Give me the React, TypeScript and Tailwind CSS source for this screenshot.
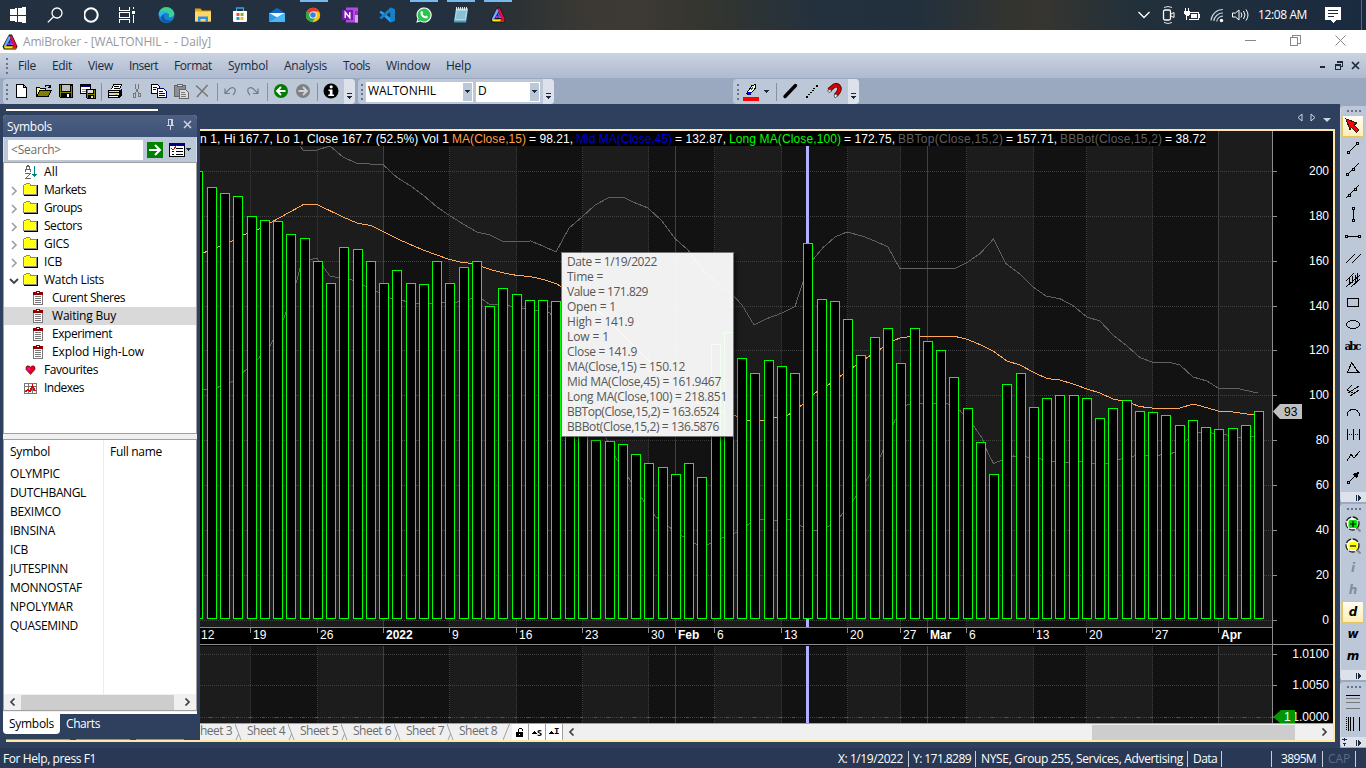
import React, { useLayoutEffect, useRef } from "react";

/* ---------- text that is tracked to a fixed width ---------- */
function Fit({ w, className = "", children }: { w: number; className?: string; children: string }) {
  const ref = useRef<HTMLSpanElement>(null);
  useLayoutEffect(() => {
    const el = ref.current;
    if (!el) return;
    el.style.letterSpacing = "0px";
    const natural = el.getBoundingClientRect().width;
    el.style.letterSpacing = `${(w - natural) / children.length}px`;
  }, [w, children]);
  return (
    <span ref={ref} className={`inline-block shrink-0 whitespace-pre ${className}`}>
      {children}
    </span>
  );
}

type IcoProps = { w?: number; h?: number; children: React.ReactNode; smooth?: boolean };
function Ico({ w = 16, h = 16, children, smooth }: IcoProps) {
  return (
    <svg width={w} height={h} viewBox={`0 0 ${w} ${h}`} fill="none" className="block shrink-0" shapeRendering={smooth ? "auto" : "crispEdges"}>
      {children}
    </svg>
  );
}

const AmiLogo = () => (
  <Ico smooth>
    <path d="M7 0.5L10 0.5L15.5 12.5L14 15.5H2L0.5 12.5Z" fill="#111" />
    <path d="M7 1.5L1.5 12.5L4 12.5L8.8 4Z" fill="#6fa8ff" />
    <path d="M8 1.2L9.6 1.2L14.6 12L12.5 13L8.8 5Z" fill="#e8104a" />
    <path d="M8.5 5.5L11.5 11H5.5L6.5 9H8.6L7.8 7Z" fill="#f3d" />
    <path d="M2 12.2H13.8V14.6H2.6Z" fill="#ffe600" />
    <path d="M6 11L8.8 6L10 8.5L9 11Z" fill="#3b49ff" />
    <path d="M12 10L14.8 12.5L13.8 14.6L10 14.6Z" fill="#e81010" />
  </Ico>
);

/* ---------- task bar ---------- */
const taskIcons: { el: React.ReactNode; open?: boolean }[] = [
  {
    el: (
      <Ico>
        <path d="M0 2.2L6.5 1.3V7.5H0zM7.5 1.2L16 0V7.5H7.5zM0 8.5H6.5V14.7L0 13.8zM7.5 8.5H16V16L7.5 14.8z" fill="#fff" />
      </Ico>
    ),
  },
  {
    el: (
      <Ico smooth>
        <circle cx="10" cy="6" r="5" stroke="#fff" strokeWidth="1.3" />
        <path d="M6.5 9.7L0.8 15.4" stroke="#fff" strokeWidth="1.3" />
      </Ico>
    ),
  },
  { el: <Ico smooth><circle cx="7" cy="8" r="6.7" stroke="#fff" strokeWidth="2" /></Ico> },
  {
    el: (
      <Ico w={22}>
        <path d="M1 0v3.500h10V0M1 16v-3.500h10V16M1 5.500h10v5H1zM15.500 0v2M15.500 8v8" stroke="#fff" />
        <path d="M14 4h3v3h-3z" fill="#fff" />
      </Ico>
    ),
  },
  {
    el: (
      <Ico w={17} smooth>
        <circle cx="8.500" cy="8" r="8" fill="#1683d8" />
        <path d="M1 6C2.500-1 13-2 16.200 6C17 10 12 11 10.500 9.800C12 8 10.500 5.500 8 5C5 4.300 2 5 1 6Z" fill="#3fd08d" />
        <path d="M1 5.500C4 3 9 4 10.500 7C7 4.500 3.500 7 4.500 11C1 9 0.300 7.500 1 5.500Z" fill="#2fb6e8" />
        <path d="M6 7.500C5 12 9 15 14.500 12.800C11 17.500 3 16 3 10.500C3.200 8.500 4.500 7.500 6 7.500Z" fill="#0c59a4" />
      </Ico>
    ),
  },
  {
    el: (
      <Ico smooth>
        <path d="M0 1.500h5.500l1.500 2h9v11H0z" fill="#e8a317" />
        <path d="M0 4.500h16v10H0z" fill="#ffd766" />
        <path d="M3 15V9.500h10V15h-2.500v-3h-5v3z" fill="#2f8fe0" />
      </Ico>
    ),
  },
  {
    el: (
      <Ico smooth>
        <path d="M4.500 4V1h7v3" stroke="#3aa0e0" strokeWidth="1.300" />
        <path d="M1 4h14v9.500q0 1.500-1.500 1.500h-11Q1 15 1 13.500z" fill="#fff" />
        <path d="M4.500 6h3v3h-3z" fill="#f25022" />
        <path d="M8.500 6h3v3h-3z" fill="#7fba00" />
        <path d="M4.500 10h3v3h-3z" fill="#00a4ef" />
        <path d="M8.500 10h3v3h-3z" fill="#ffb900" />
      </Ico>
    ),
  },
  {
    el: (
      <Ico smooth>
        <path d="M0 6L8 0.500L16 6V15H0z" fill="#0b5cab" />
        <path d="M1 6L8 1.500L15 6V9H1z" fill="#1467b8" />
        <path d="M0 6L8 10.500L16 6V15H0z" fill="#2a9be8" />
        <path d="M0 6H16L8 10.500z" fill="#e8f4ff" />
        <path d="M0 15L16 6V15z" fill="#47b8f5" />
      </Ico>
    ),
  },
  {
    open: true,
    el: (
      <Ico smooth>
        <circle cx="7" cy="8" r="7.200" fill="#f9c513" />
        <path d="M7 8L0.700 4.500A7.200 7.200 0 0 1 13.300 4.500L7 4.500Z" fill="#e33b2e" />
        <path d="M0.700 4.500A7.200 7.200 0 0 0 6.500 15.200L9.500 10L7 8Z" fill="#2da94f" />
        <circle cx="7" cy="8" r="3.600" fill="#fff" />
        <circle cx="7" cy="8" r="2.800" fill="#3b7ded" />
      </Ico>
    ),
  },
  {
    el: (
      <Ico smooth>
        <path d="M4 0.500h12v15H4z" fill="#b44be0" />
        <path d="M13 4h3v4h-3z" fill="#9332bf" />
        <path d="M13 8h3v7.500h-3z" fill="#d9a2f0" />
        <path d="M0 3h11v10H0z" fill="#7719aa" />
        <path d="M3.200 11V5.200L7.800 10.800V5" stroke="#fff" strokeWidth="1.400" />
      </Ico>
    ),
  },
  {
    el: (
      <Ico smooth>
        <path d="M11.500 0.500L16 2.500V13.500L11.500 15.500L1.500 6.200L0.300 5.200L1.500 4L3 4.200L11.500 11Z" fill="#2a9df0" />
        <path d="M11.500 0.500L16 2.500V13.500L11.500 15.500V11.500V4.800L3 11.700L1.500 12L0.300 10.800Z" fill="#1580cc" />
      </Ico>
    ),
  },
  {
    open: true,
    el: (
      <Ico smooth>
        <path d="M0.300 15.700L1.500 11.800A7.600 7.600 0 1 1 4.300 14.600Z" fill="#fff" />
        <path d="M1.700 14.300L2.500 11.500A6.500 6.500 0 1 1 4.600 13.600Z" fill="#2bc44f" />
        <path d="M5.200 4.200L6.500 4.200L7.200 6L6.500 7Q7.500 8.900 9.300 9.500L10.200 8.600L11.900 9.500Q11.800 11.500 9.800 11.500Q5 10.500 4.400 6Q4.400 4.800 5.200 4.200Z" fill="#fff" />
      </Ico>
    ),
  },
  {
    open: true,
    el: (
      <Ico smooth>
        <path d="M3 1.500h12L13 15H1z" fill="#a8d8e6" />
        <path d="M1 13.500h12.300l-.300 2H1z" fill="#4f97ad" />
        <path d="M4 5h9M3.500 7h9M3.200 9h9M3 11h9" stroke="#5aa0b8" strokeWidth=".8" />
        <path d="M3.500 0v3M5.500 0v3M7.500 0v3M9.500 0v3M11.500 0v3M13.500 0v3" stroke="#dfe6ea" />
      </Ico>
    ),
  },
  { open: true, el: <AmiLogo /> },
];

function TaskBar() {
  return (
    <div className="flex h-[30px] shrink-0 items-center justify-between bg-[linear-gradient(90deg,#223040_0%,#223040_33%,#2c3234_38%,#3c3934_43%,#3d3934_47%,#33352f_52%,#23313e_60%,#22303d_67%,#33342f_74%,#37352f_76%,#22303a_83%,#1a2b40_100%)]">
      <div className="flex h-full">
        {taskIcons.map((t, i) => (
          <div key={i} className="relative flex h-full w-[36.9px] items-center justify-center">
            {t.open && <span className="absolute top-0 h-[2px] w-[28px] bg-[#76b9ed]" />}
            {t.el}
          </div>
        ))}
      </div>
      <div className="flex h-full items-center text-white">
        <Ico w={12} h={8} smooth><path d="M0.500 1L6 6.500L11.500 1" stroke="#fff" strokeWidth="1.300" /></Ico>
        <span className="w-[12px]" />
        <Ico w={13} h={20} smooth>
          <path d="M2 2.500Q6 0.500 10 2.500M2 17.500Q6 19.500 10 17.500" stroke="#ddd" />
          <rect x="1.500" y="5" width="7" height="10" rx="1.500" stroke="#fff" strokeWidth="1.300" />
          <path d="M9 9L12 7.500V12.500L9 11" stroke="#fff" />
        </Ico>
        <span className="w-[9px]" />
        <Ico w={17}>
          <path d="M5.500 5.500h9v7h-10M15.500 7v4" stroke="#fff" />
          <path d="M7 7h6v4H7z" fill="#fff" />
          <path d="M0 4h6v3L4 9H2L0 7zM1 1h1v3H1zM4 1h1v3H4zM2 9h1v4H2z" fill="#fff" />
        </Ico>
        <span className="w-[9px]" />
        <Ico w={14} smooth>
          <path d="M1 13.500A12 12 0 0 1 13 2.500M3.800 14A9 9 0 0 1 13 6M6.700 14.500A6 6 0 0 1 13 9.200" stroke="#c9ced3" strokeWidth="1.200" />
          <circle cx="11.500" cy="13.500" r="1.700" fill="#fff" />
        </Ico>
        <span className="w-[8px]" />
        <Ico w={17} smooth>
          <path d="M.5 6h3L7 3v10L3.500 10H.5z" stroke="#fff" />
          <path d="M9 5.500q1.800 2.500 0 5M11.500 4q3 4 0 8M14 2.500q4 5.500 0 11" stroke="#fff" />
        </Ico>
        <span className="w-[9px]" />
        <Fit w={49} className="text-[12px] leading-4">12:08 AM</Fit>
        <span className="w-[18px]" />
        <Ico w={16} h={16}>
          <path d="M0 0h16v13H11L8 16L5 13H0z" fill="#fff" />
          <path d="M3 3.500h10M3 6.500h10M3 9.500h6" stroke="#1d2a38" />
        </Ico>
        <span className="ml-5 mr-1 h-full w-px bg-[#5a6673]" />
      </div>
    </div>
  );
}

function TitleBar() {
  return (
    <div className="flex h-[23px] shrink-0 items-center bg-white pl-[2px] text-[#999]">
      <AmiLogo />
      <Fit w={188} className="ml-[5px] text-[12px]">{"AmiBroker - [WALTONHIL -  - Daily]"}</Fit>
      <div className="ml-auto flex items-center gap-[34px] pb-[3px] pr-5">
        <Ico w={11} h={11}><path d="M0 5.500h11" stroke="#888" /></Ico>
        <Ico w={11} h={11}><path d="M.5 2.500h7v8h-7zM2.500 2.500v-2h8v8h-3" stroke="#888" /></Ico>
        <Ico w={11} h={11} smooth><path d="M.5 .5l10 10M10.500 .5l-10 10" stroke="#888" /></Ico>
      </div>
    </div>
  );
}

const Grip = () => (
  <Ico w={2} h={16}><path d="M0 0h2v2H0zM0 5h2v2H0zM0 9h2v2H0zM0 14h2v2H0z" fill="#65748e" /></Ico>
);

const menus: [string, number, number][] = [
  ["File", 18, 16], ["Edit", 20, 16], ["View", 25, 16], ["Insert", 29, 16], ["Format", 38, 16],
  ["Symbol", 40, 16], ["Analysis", 43, 16], ["Tools", 27, 16], ["Window", 44, 16], ["Help", 25, 0],
];

function MenuBar() {
  return (
    <div className="flex h-[25px] shrink-0 items-center bg-linear-to-b from-[#cad3e2] to-[#aebacf] pl-[6px] text-[12px] text-[#1b293e]">
      <Grip />
      <div className="ml-[10px] flex gap-4">
        {menus.map(([m, w]) => <Fit key={m} w={w}>{m}</Fit>)}
      </div>
      <div className="ml-auto flex items-center gap-2 pb-px pr-[6px]">
        <Ico w={8} h={8}><path d="M1 5h5v2H1z" fill="#1b293e" /></Ico>
        <Ico w={8} h={9}>
          <path d="M2.500 2V0M2 1h6M7.500 0v6M7 5.500H6" stroke="#1b293e" />
          <path d="M.5 4.500h5v4h-5zM0 4h6" stroke="#1b293e" />
          <path d="M2 0h6v2H2zM0 3h6v2H0z" fill="#1b293e" />
        </Ico>
        <Ico w={9} h={9} smooth><path d="M1 1l7 7M8 1l-7 7" stroke="#1b293e" strokeWidth="1.700" /></Ico>
      </div>
    </div>
  );
}

/* ---------- main tool bar ---------- */
const Sep = () => <span className="ml-[3px] mr-[2px] h-[18px] w-px bg-[#8591a2]" />;
const Overflow = () => (
  <div className="flex h-[25px] w-[11px] items-end justify-center rounded-r-sm bg-[#dce1ec] pb-1">
    <Ico w={5} h={7}><path d="M0 0h5v1H0zM0 3h5v1H0zM1 4h3v1H1zM2 5h1v1H2z" fill="#1b293e" /></Ico>
  </div>
);
const Caret = () => <Ico w={5} h={3}><path d="M0 0h5v1H0zM1 1h3v1H1zM2 2h1v1H2z" fill="#1b293e" /></Ico>;

const disk = (
  <>
    <path d="M1 1h14v14H2L1 14z" fill="#000" />
    <path d="M2 2h1v12H2zM13 3h1v11h-1zM3 9h10v1H3z" fill="#808000" />
    <path d="M4 2h8v6H4z" fill="#c0c0c0" />
    <path d="M9 11h2v3H9z" fill="#fff" />
  </>
);
const newI = <Ico><path d="M2.500 1.500h7l3 3v10h-10zM9.500 1.500v3h3" fill="#fff" stroke="#000" /></Ico>;
const openI = (
  <Ico>
    <path d="M.5 13.500v-9h3l1 1h5v2" fill="#ffff66" stroke="#000" />
    <path d="M.5 13.500L4 7.500h11.500L12 13.500z" fill="#808000" stroke="#000" />
    <path d="M9 3.500L10.500 2h2L14.500 4M14.500 1.500V4.500H12" stroke="#000" />
  </Ico>
);
const saveI = <Ico>{disk}</Ico>;
const saveAllI = (
  <Ico>
    <path d="M.5 1.500h10v9H.5z" fill="#fff" stroke="#000" />
    <path d="M1 2h9v2H1z" fill="#000080" />
    <path d="M2 6h7M2 8h5" stroke="#888" />
    <path d="M6 6h10v10H7L6 15z" fill="#000" />
    <path d="M7 7h1v8H7zM14 7h1v8h-1zM8 11h6v1H8z" fill="#808000" />
    <path d="M8 7h5v3H8zM11 13h2v2h-2z" fill="#ddd" />
  </Ico>
);
const printI = (
  <Ico>
    <path d="M4.500 6.500L6.500 1.500h8l-2 5" fill="#fff" stroke="#000" />
    <path d="M7 3.500h5M6.500 5.500h5" stroke="#000" />
    <path d="M1 7h12l2-1v6l-3 3H1z" fill="#000" />
    <path d="M2 8h10v1H2zM2 10h10v2H2z" fill="#d8d8d8" />
    <path d="M2 13h9v1H2z" fill="#fff" />
    <path d="M8 11h2v1H8z" fill="#cc0" />
  </Ico>
);
const cutI = (
  <Ico>
    <path d="M6.500 1v4l4 6M9.500 1v4l-4 6" stroke="#777" />
    <path d="M4.500 10.500h2v4h-2zM9.500 10.500h2v3h-2z" stroke="#777" />
  </Ico>
);
const copyI = (
  <Ico>
    <path d="M.5 1.500h6l2 2v7h-8z" fill="#fff" stroke="#000" />
    <path d="M6.500 5.500h6l2.500 2.500v6.500H6.500z" fill="#fff" stroke="#000080" />
    <path d="M2 4.500h4M2 6.500h3M8 8.500h4M8 10.500h6M8 12.500h6" stroke="#000080" />
  </Ico>
);
const pasteI = (
  <Ico>
    <path d="M1.500 2.500h11v11h-11z" fill="#8a8f99" stroke="#666" />
    <path d="M4.500 1.500h5v2h-5z" fill="#ddd" stroke="#666" />
    <path d="M6.500 6.500h6l2.500 2.500v6H6.500z" fill="#ddd" stroke="#666" />
    <path d="M8 9.500h4M8 11.500h5M8 13.500h5" stroke="#777" />
  </Ico>
);
const xI = <Ico smooth><path d="M1 2.500L13 13.500M12.500 2L2 14" stroke="#777" strokeWidth="1.500" /></Ico>;
const undoI = <Ico smooth><path d="M2 5.500v5h5M2.500 10L7 5.500Q10 3.500 12 6Q13 9 10 12" stroke="#757b86" strokeWidth="1.200" /></Ico>;
const redoI = <Ico smooth><path d="M13 5.500v5H8M12.500 10L8 5.500Q5 3.500 3 6Q2 9 5 12" stroke="#757b86" strokeWidth="1.200" /></Ico>;
const backI = <Ico smooth><circle cx="8" cy="8" r="7" fill="#007d00" /><path d="M12.500 8H4.500M8 4L4 8L8 12" stroke="#fff" strokeWidth="1.800" /></Ico>;
const fwdI = <Ico smooth><circle cx="8" cy="8" r="7" fill="#808080" /><path d="M3.500 8H11.500M8 4L12 8L8 12" stroke="#ccd3df" strokeWidth="1.800" /></Ico>;
const infoI = (
  <Ico smooth>
    <circle cx="8" cy="8" r="7.500" fill="#000" />
    <circle cx="8.200" cy="3.800" r="1.600" fill="#fff" />
    <path d="M5.500 6.500h4v5h1.500v1.500H5.300v-1.500h1.500V8H5.500z" fill="#fff" />
  </Ico>
);

const Cell = ({ children, w = "w-[22px]" }: { children: React.ReactNode; w?: string }) => (
  <div className={`flex items-center justify-center pb-px ${w}`}>{children}</div>
);

function Combo({ text, w, tw }: { text: string; w: string; tw: number }) {
  return (
    <div className={`flex h-5 items-center bg-white pl-[2px] text-[12px] text-black ${w}`}>
      <Fit w={tw} className="-mt-px">{text}</Fit>
      <div className="ml-auto flex h-5 w-[11px] items-center justify-center border border-white bg-[#bcc7d8]"><Caret /></div>
    </div>
  );
}

function ToolBar() {
  const grp = "flex h-[25px] items-center rounded-sm bg-[#bcc7d8]";
  return (
    <div className="flex h-[26px] shrink-0 items-start bg-[#9ba9c0] pl-[3px] pt-px">
      <div className={`${grp} w-[352px] pl-[3px]`}>
        <Grip />
        <span className="w-[3px]" />
        <Cell>{newI}</Cell><Cell>{openI}</Cell><Cell>{saveI}</Cell><Cell w="w-[21px]">{saveAllI}</Cell>
        <Sep /><Cell>{printI}</Cell><Cell>{cutI}</Cell><Cell>{copyI}</Cell><Cell>{pasteI}</Cell><Cell>{xI}</Cell>
        <Sep /><Cell>{undoI}</Cell><Cell>{redoI}</Cell>
        <Sep /><Cell>{backI}</Cell><Cell>{fwdI}</Cell>
        <Sep /><Cell w="w-[21px]">{infoI}</Cell>
        <div className="ml-auto"><Overflow /></div>
      </div>
      <div className={`${grp} ml-[3px] w-[196px] pl-[3px]`}>
        <Grip />
        <span className="w-[3px]" />
        <Combo text="WALTONHIL" w="w-[107px]" tw={68} />
        <span className="w-[3px]" />
        <Combo text="D" w="w-[64px]" tw={8} />
        <div className="ml-auto"><Overflow /></div>
      </div>
      <div className={`${grp} ml-[179px] w-[126px] pl-1`}>
        <Grip />
        <span className="w-1" />
        <Ico w={17} h={18}>
          <path d="M3.500 10.500L9 2.500L12.500 1.500V5L7 11.500z" fill="#fff" stroke="#000" />
          <path d="M4 12L6 8.500L9 9.500L7 12z" fill="#0000c8" />
          <path d="M8 7l2-3" stroke="#080" />
          <path d="M0 14h16v4H0z" fill="#f00" />
        </Ico>
        <span className="w-[4px]" /><Caret /><span className="w-[4px]" /><Sep />
        <Cell><Ico smooth><path d="M3 13.500L13.500 2.500" stroke="#000" strokeWidth="3.400" strokeLinecap="round" /></Ico></Cell>
        <Cell><Ico><path d="M2 13h2v2H2zM4 11h2v1H4zM6 9h2v1H6zM8 7h2v1H8zM9 5h2v1H9zM12 2h2v2h-2z" fill="#000" /></Ico></Cell>
        <Cell>
          <Ico smooth>
            <path d="M3 7L8 2.800Q12 1 13.500 5Q14 8 9.500 12.500" stroke="#500" strokeWidth="4.500" />
            <path d="M3 7L8 2.800Q12 1 13.500 5Q14 8 9.500 12.500" stroke="#e00000" strokeWidth="2.600" />
            <path d="M1.500 7.500L4.500 6.500L5.500 8.500L3 9.500zM8 12L10 11L11.500 13L9 15z" fill="#fff" stroke="#333" strokeWidth=".7" />
          </Ico>
        </Cell>
        <div className="ml-auto"><Overflow /></div>
      </div>
    </div>
  );
}

/* ---------- symbols panel ---------- */
const Folder = () => (
  <Ico>
    <defs>
      <pattern id="dither" width="2" height="2" patternUnits="userSpaceOnUse">
        <path d="M0 0h2v2H0z" fill="#ffff00" /><path d="M0 0h1v1H0zM1 1h1v1H1z" fill="#ffffb8" />
      </pattern>
    </defs>
    <path d="M.5 3.500l1-1h1l1-1h3l1 1v1h6v9H.5z" fill="url(#dither)" stroke="#8a8a7a" />
    <path d="M1 13.500h14M14.500 3v11" stroke="#000" />
  </Ico>
);
const Clip = () => (
  <Ico w={12} h={14}>
    <path d="M1.500 2.500h9v11h-9z" fill="#fff" stroke="#777" />
    <path d="M1 1h10v3H1zM4 0h4v2H4z" fill="#8b0000" />
    <path d="M5 1h2v1H5z" fill="#fff" />
    <path d="M3 5.500h6M3 7.500h6M3 9.500h6M3 11.500h6" stroke="#777" />
  </Ico>
);
const AllIcon = () => (
  <Ico w={14} h={14}>
    <path d="M1 6.500l2.500-6h1L7 6.500M2 4.500h4M1 8.500h5.500L1.500 13.500H7" stroke="#666" strokeWidth="1.200" />
    <path d="M10.500 1v11M8 9.500h5M9 10.500h3" stroke="#008080" />
  </Ico>
);
const Heart = () => (
  <Ico w={11} h={10} smooth>
    <path d="M5.500 9.500L1 4.500Q.5 1 3 .8Q5 .8 5.500 2.500Q6 .8 8 .8Q10.500 1 10 4.500z" fill="#e3001b" stroke="#500" strokeWidth=".6" />
    <path d="M2 2.500h3v3H3z" fill="#f0d" />
  </Ico>
);
const IndexIcon = () => (
  <Ico w={13} h={11}>
    <path d="M.5 .5h12v10H.5zM4.500 0v11M8.500 0v11M0 3.500h13M0 7.500h13" stroke="#777" />
    <path d="M1 9L4 6.500L6 8L8.500 3L11 8" stroke="#e00000" strokeWidth="1.400" />
  </Ico>
);
const Chev = ({ open }: { open?: boolean }) => (
  <Ico w={10} h={10} smooth>
    {open ? <path d="M1 3l4 4l4-4" stroke="#404040" strokeWidth="1.800" /> : <path d="M3 1l4 4l-4 4" stroke="#a0a0a0" strokeWidth="1.700" />}
  </Ico>
);

const tree: { t: string; w: number; kind: "all" | "folder" | "open" | "list" | "heart" | "index"; sel?: boolean }[] = [
  { t: "All", w: 14, kind: "all" },
  { t: "Markets", w: 42, kind: "folder" },
  { t: "Groups", w: 38, kind: "folder" },
  { t: "Sectors", w: 38, kind: "folder" },
  { t: "GICS", w: 25, kind: "folder" },
  { t: "ICB", w: 18, kind: "folder" },
  { t: "Watch Lists", w: 60, kind: "open" },
  { t: "Curent Sheres", w: 73, kind: "list" },
  { t: "Waiting Buy", w: 64, kind: "list", sel: true },
  { t: "Experiment", w: 60, kind: "list" },
  { t: "Explod High-Low", w: 92, kind: "list" },
  { t: "Favourites", w: 54, kind: "heart" },
  { t: "Indexes", w: 40, kind: "index" },
];

const symbols: [string, number][] = [
  ["OLYMPIC", 50], ["DUTCHBANGL", 76], ["BEXIMCO", 51], ["IBNSINA", 45], ["ICB", 18],
  ["JUTESPINN", 58], ["MONNOSTAF", 72], ["NPOLYMAR", 63], ["QUASEMIND", 68],
];

function TreeRow({ r }: { r: (typeof tree)[number] }) {
  const list = r.kind === "list";
  return (
    <div className={`flex h-[18px] items-center ${r.sel ? "bg-[#d9d9d9]" : ""}`}>
      <div className={`flex items-center justify-center ${list ? "w-[28px]" : "w-[19px] pt-[2px]"}`}>
        {r.kind === "folder" && <Chev />}
        {r.kind === "open" && <Chev open />}
      </div>
      <div className={list ? "w-5" : "w-[21px]"}>
        {list && <Clip />}
        {(r.kind === "folder" || r.kind === "open") && <Folder />}
        {r.kind === "all" && <div className="pl-px"><AllIcon /></div>}
        {r.kind === "heart" && <div className="pl-[2px]"><Heart /></div>}
        {r.kind === "index" && <div className="pl-px"><IndexIcon /></div>}
      </div>
      <Fit w={r.w}>{r.t}</Fit>
    </div>
  );
}

function SymbolsPanel() {
  return (
    <div className="flex w-[200px] shrink-0 flex-col">
      <div className="ml-[6px] mt-[5px] h-[2px] w-[152px] shrink-0 bg-[#fffbf0]" />
      <div className="ml-[3px] mt-1 flex h-[597px] w-[194px] shrink-0 flex-col rounded-t bg-[#f0f0f0] text-[12px] text-black">
        <div className="flex h-[22px] shrink-0 items-center rounded-t bg-linear-to-b from-[#4d6082] to-[#3d5277] pl-1 text-white">
          <Fit w={45} className="mt-[2px]">Symbols</Fit>
          <div className="ml-auto flex items-center gap-2 pb-[3px] pr-[5px]">
            <Ico w={9} h={11}><path d="M2.500 6V.5h4V6M5.500 0v6M1 6.500h7M4.500 7v4" stroke="#ced4df" /></Ico>
            <Ico w={9} h={9} smooth><path d="M1 1l7 7M8 1l-7 7" stroke="#ced4df" strokeWidth="1.500" /></Ico>
          </div>
        </div>
        <div className="flex h-[25px] shrink-0 items-center border-x border-[#d5dce8] bg-[#bcc7d8] pl-1">
          <div className="flex h-5 w-[135px] items-center bg-white pl-[3px] text-[#6d6d6d]"><Fit w={50}>{"<Search>"}</Fit></div>
          <span className="w-1" />
          <Ico smooth><path d="M0 0h16v16H0z" fill="#008000" /><path d="M2 8h11M8 3l5 5l-5 5" stroke="#fff" strokeWidth="2" /></Ico>
          <span className="w-[6px]" />
          <Ico>
            <path d="M.5 1.500h15v13H.5z" fill="#fff" stroke="#000" />
            <path d="M0 1h16v3H0z" fill="#000080" />
            <path d="M7 6.500h7M7 9.500h7M7 12.500h7M3 9.500h2M3 12.500h2" stroke="#000" />
            <path d="M2 6l2 2l4-5" stroke="#e00000" />
          </Ico>
          <span className="w-px" />
          <Caret />
        </div>
        <div className="h-[272px] shrink-0 border border-[#a0a0a0] bg-white">
          {tree.map((r) => <TreeRow key={r.t} r={r} />)}
        </div>
        <div className="mt-[5px] flex h-[272px] shrink-0 flex-col border border-[#a0a0a0] bg-white">
          <div className="flex min-h-0 grow">
            <div className="w-[100px] border-r border-[#e6eff8] pl-[6px]">
              <div className="flex h-6 items-center"><Fit w={40}>Symbol</Fit></div>
              {symbols.map(([s, w]) => <div key={s} className="flex h-[19px] items-center"><Fit w={w}>{s}</Fit></div>)}
            </div>
            <div className="flex h-6 items-center pl-[6px]"><Fit w={52}>Full name</Fit></div>
          </div>
          <div className="flex h-4 shrink-0 items-center bg-[#f0f0f0]">
            <div className="flex w-[17px] justify-center"><Ico w={7} h={8} smooth><path d="M5.500 .5L2 4l3.500 3.500" stroke="#404040" strokeWidth="1.700" /></Ico></div>
            <div className="h-[15px] w-[153px] bg-[#cdcdcd]" />
            <div className="ml-auto flex w-[17px] justify-center"><Ico w={7} h={8} smooth><path d="M1.500 .5L5 4L1.500 7.500" stroke="#404040" strokeWidth="1.700" /></Ico></div>
          </div>
        </div>
      </div>
      <div className="ml-[3px] flex h-[23px] w-[194px] items-start border-t-2 border-white text-[12px]">
        <div className="flex h-5 w-[57px] items-center justify-center rounded-b-sm bg-white text-black"><Fit w={45}>Symbols</Fit></div>
        <div className="flex h-5 items-center pl-[6px] text-white"><Fit w={34}>Charts</Fit></div>
      </div>
      <div className="ml-[6px] mt-1 flex h-px gap-[6px]">
        <span className="w-[64px] bg-[#8d97a8]" /><span className="w-[54px] bg-[#8d97a8]" /><span className="w-[48px] bg-[#8d97a8]" />
      </div>
      <div className="ml-[6px] h-[2px] shrink-0 bg-[#ffe8a6]" />
    </div>
  );
}

/* ---------- chart ---------- */
const barTops = [
  171, 187, 193, 196, 216, 220, 221, 234, 238, 261, 283, 247, 249, 261, 283, 270, 283, 284, 261, 283, 267, 261, 306, 288, 294, 300, 300, 301,
  400, 400, 440, 441, 444, 454, 463, 467, 474, 463, 477, 344, 332, 358, 373, 360, 366, 373, 243, 299, 301, 319, 355, 337, 328, 363, 328,
  341, 350, 377, 408, 442, 474, 384, 373, 407, 398, 395, 395, 398, 418, 408, 400, 411, 412, 415, 425, 420, 427, 429, 428, 425, 411,
];
const ma15 =
  "200,254 203,253 216,248 230,242 243,235 257,230 270,223 279,218 290,212 303.5,204.5 317,204.5 343,217 357,223 371.6,225.7 396.6,238.5 423,250 449.5,259.5 460,262 472,263.500 483,267 490,269.500 501.5,272.500 516,275.3 530.6,276.6 543,279.5 556,283.5 561,286.5 583,300 603,315 623,335 643,355 667,377 697,402 720,412 735,415.6 747,420 760,421 773,418 788,415 802,405 815,393 828,385 842,375 855,366 868,357 882,348 895,340 901,337.6 907,337 919,336.4 955,336.4 967,339.3 980,344.6 993,351 1007,361 1020,365 1033,372 1047,378.6 1060,380 1073,384 1087,389 1100,393 1113,399 1127,402 1140,406.6 1152,408 1167,409 1180,408 1193,404 1203,406.6 1218,411 1233,412 1254,415";
const bbTop =
  "300,145.6 303,150 317,150 330,146 343,157 357,163.5 383,164.5 397,177.5 410,185.5 423,195 437,207 449.5,215.5 463,224 477,232 490,235 501.6,241 516,242 530.6,241 543,246 556,252 569,228 582,217 595,205 608,198 623,197 633,202 648,208 662,221 675,238.6 688,250 703,270.6 717,283 730,292 742,305 754,325 767,318.6 782,313 795,306.6 803,281.6 813,259.6 823,247.6 835,237 847,232 862,236 875,241 888,247 900,269 907,268.5 955,268.5 967,262.6 980,253.6 993.6,239 1006,263.6 1020,274 1033,287 1046,296 1060.6,299 1073,305.6 1087,317 1100,321 1113,335 1127,346 1140,357.6 1152,362 1168,362 1180,365 1193,377 1207,381 1218,388 1235,388 1258,393";
const bbBot =
  "200,389 203,390 216,388 232,381.6 244,371.6 257,360 270.6,345 284,318 297.6,278 302,260 317,258.6 330,276 338,277.6 352,280 363,285 377,291.6 390,298 417,303.6 430,303.6 443,302 457,302 472,298.6 483,299.6 489,304 497,304 510,306 525,309 550,313 556,321.6 563,338 577,382 607,440 615,456.6 630,480 643,500 655,516 668.6,526.6 683,536.6 696,544 709,544 722,538 736,532.6 749,524 762,519 775,520.6 789,519 802,526.6 816,531 828,526.6 840.6,516 855,498 868.5,477 882,453 895,420 907,405 920,404 947,403.6 960,410.6 973,425 982,438 988,453 993.6,463.6 1002,460 1013.5,456 1027,457 1041,459 1054,461.6 1067,462.6 1081,461 1095,463.6 1107,463.6 1121,459 1134,456 1147,455 1160,455 1175,452.6 1187,440 1199,432.6 1212,433 1227,435 1240,438 1254,436.6";
const dates: [number, string, boolean?][] = [
  [250.5, "19"], [317.5, "26"], [383.5, "2022", true], [449.5, "9"], [516.5, "16"], [582.5, "23"], [648.5, "30"], [675.5, "Feb", true],
  [714.5, "6"], [781.5, "13"], [847.5, "20"], [900.5, "27"], [927.5, "Mar", true], [966.5, "6"], [1033.5, "13"], [1086.5, "20"], [1152.5, "27"], [1218.5, "Apr", true],
];
const darkBands = [[383.5, 449.5], [516.5, 582.5], [648.5, 714.5], [781.5, 847.5], [900.5, 966.5], [1033.5, 1086.5], [1152.5, 1218.5]];
const yGrid: [number, string][] = [
  [171.5, "200"], [216.5, "180"], [261.5, "160"], [306.5, "140"], [350.5, "120"], [395.5, "100"], [440.5, "80"], [485.5, "60"], [530.5, "40"], [575.5, "20"], [620.5, "0"],
];
const yGrid2: [number, string][] = [[654.5, "1.0100"], [685.5, "1.0050"], [717.5, "1.0000"]];
const legend: [number, number, string, string][] = [
  [200, 249, "#fff", "n 1, Hi 167.7, Lo 1, Close 167.7 (52.5%) Vol 1"],
  [452, 74, "#ff9f4a", "MA(Close,15)"],
  [529, 44, "#fff", "= 98.21,"],
  [576, 96, "#0000d8", "Mid MA(Close,45)"],
  [675, 51, "#fff", "= 132.87,"],
  [729, 112, "#00ff00", "Long MA(Close,100)"],
  [844, 51, "#fff", "= 172.75,"],
  [898, 105, "#606060", "BBTop(Close,15,2)"],
  [1006, 51, "#fff", "= 157.71,"],
  [1060, 102, "#606060", "BBBot(Close,15,2)"],
  [1165, 41, "#fff", "= 38.72"],
];

function Chart() {
  return (
    <svg width="1133" height="592" viewBox="200 131 1133 592" shapeRendering="crispEdges" fill="none" className="block font-['Liberation_Sans',sans-serif] text-[12px]">
      <path d="M200 131h1133v592H200z" fill="#000" />
      <path d="M200 131h1072v496H200zM200 646h1072v77H200z" fill="#1c1c1c" />
      {darkBands.map(([a, b]) => <path key={a} d={`M${a} 131H${b}V627H${a}zM${a} 646H${b}V723H${a}z`} fill="#121212" />)}
      <path d="M250.500 646H317.500V723H250.500z" fill="#121212" />
      {[...yGrid, ...yGrid2].map(([y]) => <path key={y} d={`M200 ${y}H1272`} stroke="#424242" strokeDasharray="1 1" />)}
      {dates.map(([x, , major]) => <path key={x} d={`M${x} 131V627M${x} 646V723`} stroke={major ? "#404040" : "#3c3c3c"} strokeDasharray={major ? undefined : "1 1"} />)}
      <path d="M209 717.500H1272" stroke="#008c00" strokeDasharray="3 10.260" />
      <path d="M806 131h3v496h-3zM806 646h3v77h-3z" fill="#b0b0ff" />
      <polyline points={bbTop} stroke="#606060" />
      <polyline points={bbBot} stroke="#606060" />
      <polyline points={ma15} stroke="#ffa858" />
      {barTops.map((y, i) => {
        const x = Math.round(197.96 + i * 13.26 - 4.5) + 0.5;
        return <path key={i} d={`M${x} ${y + 0.5}h9V618.500h-9z`} fill="#000" stroke="#00ff00" />;
      })}
      <path d="M200 131h1006v15H200z" fill="#000" />
      <path d="M200 627.500H1272M200 644.500H1333M1272.500 131V723" stroke="#8c8c8c" />
      {yGrid.concat(yGrid2).map(([y]) => <path key={y} d={`M1273 ${y}h4`} stroke="#8c8c8c" />)}
      {dates.map(([x]) => <path key={x} d={`M${x} 628v5`} stroke="#8c8c8c" />)}
      <g fill="#fff" shapeRendering="auto">
        {yGrid.map(([y, t]) => <text key={t} x="1329" y={y + 3.5} textAnchor="end">{t}</text>)}
        {yGrid2.map(([y, t]) => <text key={t} x="1329" y={y + 3.5} textAnchor="end">{t}</text>)}
        <text x="201" y="639">12</text>
        {dates.map(([x, t, b]) => <text key={x} x={x + 2.5} y="639" className={b ? "font-bold" : ""}>{t}</text>)}
        {legend.map(([x, w, c, t]) => <text key={x} x={x} y="143" textLength={w} fill={c}>{t}</text>)}
      </g>
      <g shapeRendering="auto">
        <path d="M1273 411.500L1280 404h22v15h-22z" fill="#c0c0c0" />
        <text x="1284" y="416" fill="#000">93</text>
        <path d="M1273 717L1281 710h14v13h-15z" fill="#009600" />
        <text x="1284" y="721" fill="#fff">1</text>
      </g>
    </svg>
  );
}

const tip: [string, number][] = [
  ["Date = 1/19/2022", 90], ["Time =", 36], ["Value = 171.829", 81], ["Open = 1", 49], ["High = 141.9", 67], ["Low = 1", 42],
  ["Close = 141.9", 70], ["MA(Close,15) = 150.12", 118], ["Mid MA(Close,45) = 161.9467", 154], ["Long MA(Close,100) = 218.851", 160],
  ["BBTop(Close,15,2) = 163.6524", 152], ["BBBot(Close,15,2) = 136.5876", 152],
];

const Slant = () => <Ico w={7} h={16} smooth><path d="M0 0l6 16M3.500 10L1 16" stroke="#a0a0a0" /></Ico>;

function SheetBar() {
  return (
    <div className="flex h-[17px] items-center border-t border-[#a0a0a0] bg-[#f0f0f0] text-[12px] text-[#6d6d6d]">
      <Fit w={32} className="-mt-[2px]">heet 3</Fit>
      <span className="w-[3px]" />
      {["Sheet 4", "Sheet 5", "Sheet 6", "Sheet 7", "Sheet 8"].map((s) => (
        <div key={s} className="flex items-center">
          <Slant />
          <span className="w-[5px]" />
          <Fit w={38} className="-mt-[2px]">{s}</Fit>
          <span className="w-[3px]" />
        </div>
      ))}
      <span className="w-[3px]" />
      <Ico w={7} h={16} smooth><path d="M6.500 0L0 16" stroke="#a0a0a0" /></Ico>
      <div className="ml-[2px] flex h-[16px] text-[9px] leading-none text-black">
        <div className="flex w-[17px] items-center justify-center border-r border-[#a0a0a0] bg-white">
          <Ico w={8} h={9}><path d="M0 4h7v5H0zM2 1h1v3H2zM3 0h3v1H3zM6 1h1v2H6z" fill="#000" /><path d="M3 6h1v1H3z" fill="#fff" /></Ico>
        </div>
        <div className="flex w-[17px] items-center justify-center border-r border-[#a0a0a0] bg-white">
          <Ico w={5} h={3}><path d="M2 0h1v1H2zM1 1h3v1H1zM0 2h5v1H0z" fill="#000" /></Ico><b>S</b>
        </div>
        <div className="flex w-[17px] items-center justify-center border-r border-[#a0a0a0] bg-white">
          <Ico w={5} h={3}><path d="M2 0h1v1H2zM1 1h3v1H1zM0 2h5v1H0z" fill="#000" /></Ico><b className="font-['Liberation_Mono',monospace]">I</b>
        </div>
      </div>
      <div className="flex w-[16px] justify-center"><Ico w={7} h={8} smooth><path d="M5.500 .5L2 4l3.500 3.500" stroke="#404040" strokeWidth="1.700" /></Ico></div>
      <div className="ml-auto h-[15px] w-[203px] bg-[#cdcdcd]" />
      <div className="flex w-[38px] justify-end pr-[5px]"><Ico w={7} h={8} smooth><path d="M1.500 .5L5 4L1.500 7.500" stroke="#404040" strokeWidth="1.700" /></Ico></div>
    </div>
  );
}

function Document() {
  return (
    <div className="flex w-[1135px] shrink-0 flex-col">
      <div className="flex h-[25px] shrink-0 items-center justify-end gap-[7px] pr-[4px] pt-[3px]">
        <Ico w={6} h={10} smooth><path d="M5 1v7L1 4.500z" stroke="#ced4df" /></Ico>
        <Ico w={6} h={10} smooth><path d="M1 1v7L5 4.500z" stroke="#ced4df" /></Ico>
        <Ico w={8} h={10} smooth><path d="M0 5h8L4 9z" fill="#ced4df" /></Ico>
      </div>
      <div className="relative border-b-2 border-r-2 border-t-2 border-[#ffe8a6]">
        <Chart />
        <SheetBar />
        <div className="absolute left-[361px] top-[121px] h-[185px] w-[173px] border border-[#767676] bg-[#fffffff0] pl-[5px] pt-px text-[12px] leading-[15px] text-[#575757] shadow-[3px_3px_3px_rgba(0,0,0,0.4)]">
          {tip.map(([t, w]) => <div key={t} className="h-[15px]"><Fit w={w}>{t}</Fit></div>)}
        </div>
      </div>
    </div>
  );
}

/* ---------- drawing tools on the right ---------- */
const k = "#000";
const drawTools: React.ReactNode[] = [
  <><path d="M4 12L12 4" stroke={k} /><path d="M2.500 11.500h2v2h-2zM11.500 2.500h2v2h-2z" fill="#bcc7d8" stroke={k} /></>,
  <><path d="M3 12L14 1" stroke={k} /><path d="M1.500 11.500h2v2h-2zM7.500 6.500h2v2h-2z" fill="#bcc7d8" stroke={k} /></>,
  <><path d="M1 14L14 1" stroke={k} /><path d="M3.500 10.500h2v2h-2zM9.500 4.500h2v2h-2z" fill="#bcc7d8" stroke={k} /></>,
  <><path d="M8.500 2v12" stroke={k} /><path d="M7.500 1.500h2v2h-2zM7.500 13.500h2v2h-2z" fill="#bcc7d8" stroke={k} /></>,
  <><path d="M2 8.500h12" stroke={k} /><path d="M.5 7.500h2v2h-2zM13.500 7.500h2v2h-2z" fill="#bcc7d8" stroke={k} /></>,
  <path d="M1 13L10 4M7 13L16 4" stroke={k} />,
  <path d="M1 9L9 1M1 15L15 3M6 15L15 7M4.500 6v6M7.500 4v7M10.500 3v7M12.500 1v8" stroke={k} />,
  <path d="M2.500 4.500h11v8h-11z" stroke={k} />,
  <ellipse cx="8" cy="8.500" rx="6.500" ry="4" stroke={k} />,
  <text x="-0.500" y="12" fontSize="11" fontWeight="bold" textLength="17" fill={k} className="font-['DejaVu_Serif',serif]">abc</text>,
  <path d="M6.500 3L2.500 12.500H14zM7 3l6 9" stroke={k} />,
  <path d="M2 8l5-5M3 11L14 4M5 14l9-6M2 8l8 4" stroke={k} />,
  <path d="M2 11.500V9.500L4.500 6.500Q8.500 4 12 6.500L14.500 9.500v2" stroke={k} />,
  <><path d="M2.500 3v11M8.500 3v11M14.500 3v11" stroke={k} /><path d="M4 8.500h9" stroke={k} strokeDasharray="1 1" /></>,
  <path d="M2 13L6 6.500L9 10L14.500 3.500" stroke={k} />,
  <><path d="M3 13L12 4" stroke={k} /><path d="M7 4l7-2l-2 7z" fill={k} /><path d="M2.500 11.500h2v2h-2z" fill="#bcc7d8" stroke={k} /></>,
];

const HGrip = () => <div className="flex h-[9px] shrink-0 items-center justify-center"><Ico w={14} h={2}><path d="M0 0h2v2H0zM4 0h2v2H4zM8 0h2v2H8zM12 0h2v2h-2z" fill="#65748e" /></Ico></div>;
const Strip = ({ both }: { both?: boolean }) => (
  <div className="mt-auto flex h-[10px] shrink-0 items-center justify-end bg-[#dce1ec] pr-1">
    {both && <Ico w={14} h={8}><path d="M0 1h5v1H0zM2 0h1v3H2zM1 5h3v1H1zM2 6h1v2H2z" fill="#1b293e" /></Ico>}
    <Ico w={6} h={7}><path d="M0 1h1v6H0zM2 1h1v6H2zM3 2h1v4H3zM4 3h1v2H4z" fill="#1b293e" /></Ico>
  </div>
);
const RCell = ({ on, children }: { on?: boolean; children: React.ReactNode }) => (
  <div className={`ml-px flex h-[22px] w-[22px] shrink-0 items-center justify-center ${on ? "border border-[#e5c365] bg-linear-to-b from-[#fffcf2] to-[#ffeeb5]" : ""}`}>{children}</div>
);
const Zoomer = ({ c, plus }: { c: string; plus?: boolean }) => (
  <Ico smooth>
    <circle cx="7.500" cy="7.500" r="6.500" fill="#fff" stroke="#222" strokeWidth="1.300" strokeDasharray="6 1.500" />
    <path d="M12 12l3.500 3.500" stroke="#888" strokeWidth="2" />
    <rect x="3.500" y="4" width="9" height="8" rx="2" fill={c} />
    <path d={plus ? "M5 8h6M8 5v6" : "M5 8h6"} stroke="#000" strokeWidth="1.200" />
  </Ico>
);
const Letter = ({ t, dim }: { t: string; dim?: boolean }) => (
  <span className={`font-['DejaVu_Sans',sans-serif] text-[12px] font-bold italic leading-none ${dim ? "text-[#858c99]" : "text-black"}`}>{t}</span>
);

function DrawBar() {
  const g = "flex flex-col rounded-l-sm border-l border-[#d0d8e4] bg-[#bcc7d8]";
  return (
    <div className="ml-[5px] flex w-[26px] shrink-0 flex-col gap-[2px] bg-[#9ba9c0] pt-[2px]">
      <div className={`${g} h-[396px]`}>
        <HGrip />
        <RCell on>
          <Ico><path d="M1 1l11 4-3 2 5 5-2.500 2.500L6.500 9.500 5 12z" fill="#ff0000" stroke="#222" strokeWidth="1" /></Ico>
        </RCell>
        {drawTools.map((d, i) => <RCell key={i}><Ico>{d}</Ico></RCell>)}
        <Strip />
      </div>
      <div className={`${g} h-[176px]`}>
        <HGrip />
        <RCell><Zoomer c="#00e600" plus /></RCell>
        <RCell><Zoomer c="#ffff00" /></RCell>
        <RCell><Letter t="i" dim /></RCell>
        <RCell><Letter t="h" dim /></RCell>
        <RCell on><Letter t="d" /></RCell>
        <RCell><Letter t="w" /></RCell>
        <RCell><Letter t="m" /></RCell>
        <Strip />
      </div>
      <div className={`${g} h-[65px]`}>
        <HGrip />
        <RCell><Ico><path d="M1 1.500h14" stroke="#000" /><path d="M1 4.500h14M1 8.500h14M1 14.500h14" stroke="#777" /></Ico></RCell>
        <RCell><Ico><path d="M1.500 1v14" stroke="#000" strokeDasharray="1 1" /><path d="M3.500 1v14M5.500 1v14M8.500 1v14M14.500 1v14" stroke="#000" /></Ico></RCell>
        <Strip both />
      </div>
    </div>
  );
}

function StatusBar() {
  const sep = <span className="h-4 w-px bg-[#c8cedb]" />;
  return (
    <div className="flex h-5 shrink-0 items-center bg-[#293955] pl-[3px] pt-[2px] text-[12px] text-white">
      <Fit w={93}>For Help, press F1</Fit>
      <div className="ml-auto flex items-center pr-[10px]">
        <Fit w={65}>X: 1/19/2022</Fit><span className="w-[5px]" />{sep}<span className="w-1" />
        <Fit w={58}>Y: 171.8289</Fit><span className="w-[4px]" />{sep}<span className="w-[5px]" />
        <Fit w={202}>NYSE, Group 255, Services, Advertising</Fit><span className="w-1" />{sep}<span className="w-[5px]" />
        <Fit w={24}>Data</Fit><span className="w-1" />{sep}<span className="w-[49px]" />{sep}<span className="w-[9px]" />
        <Fit w={35}>3895M</Fit><span className="w-[6px]" />{sep}<span className="w-[5px]" />
        <Fit w={22} className="text-[#5d6a82]">CAP</Fit><span className="w-[5px]" />{sep}
      </div>
    </div>
  );
}

export default function App() {
  return (
    <div className="flex h-[768px] w-[1366px] flex-col overflow-hidden bg-[#2d3f5d] font-['Open_Sans','Noto_Sans',sans-serif]">
      <TaskBar />
      <TitleBar />
      <MenuBar />
      <ToolBar />
      <div className="flex h-[644px] shrink-0 bg-[#2d3f5d] bg-[radial-gradient(#31446400_0.7px,#33476733_0.9px)] bg-[size:4px_4px]">
        <SymbolsPanel />
        <Document />
        <DrawBar />
      </div>
      <StatusBar />
    </div>
  );
}
